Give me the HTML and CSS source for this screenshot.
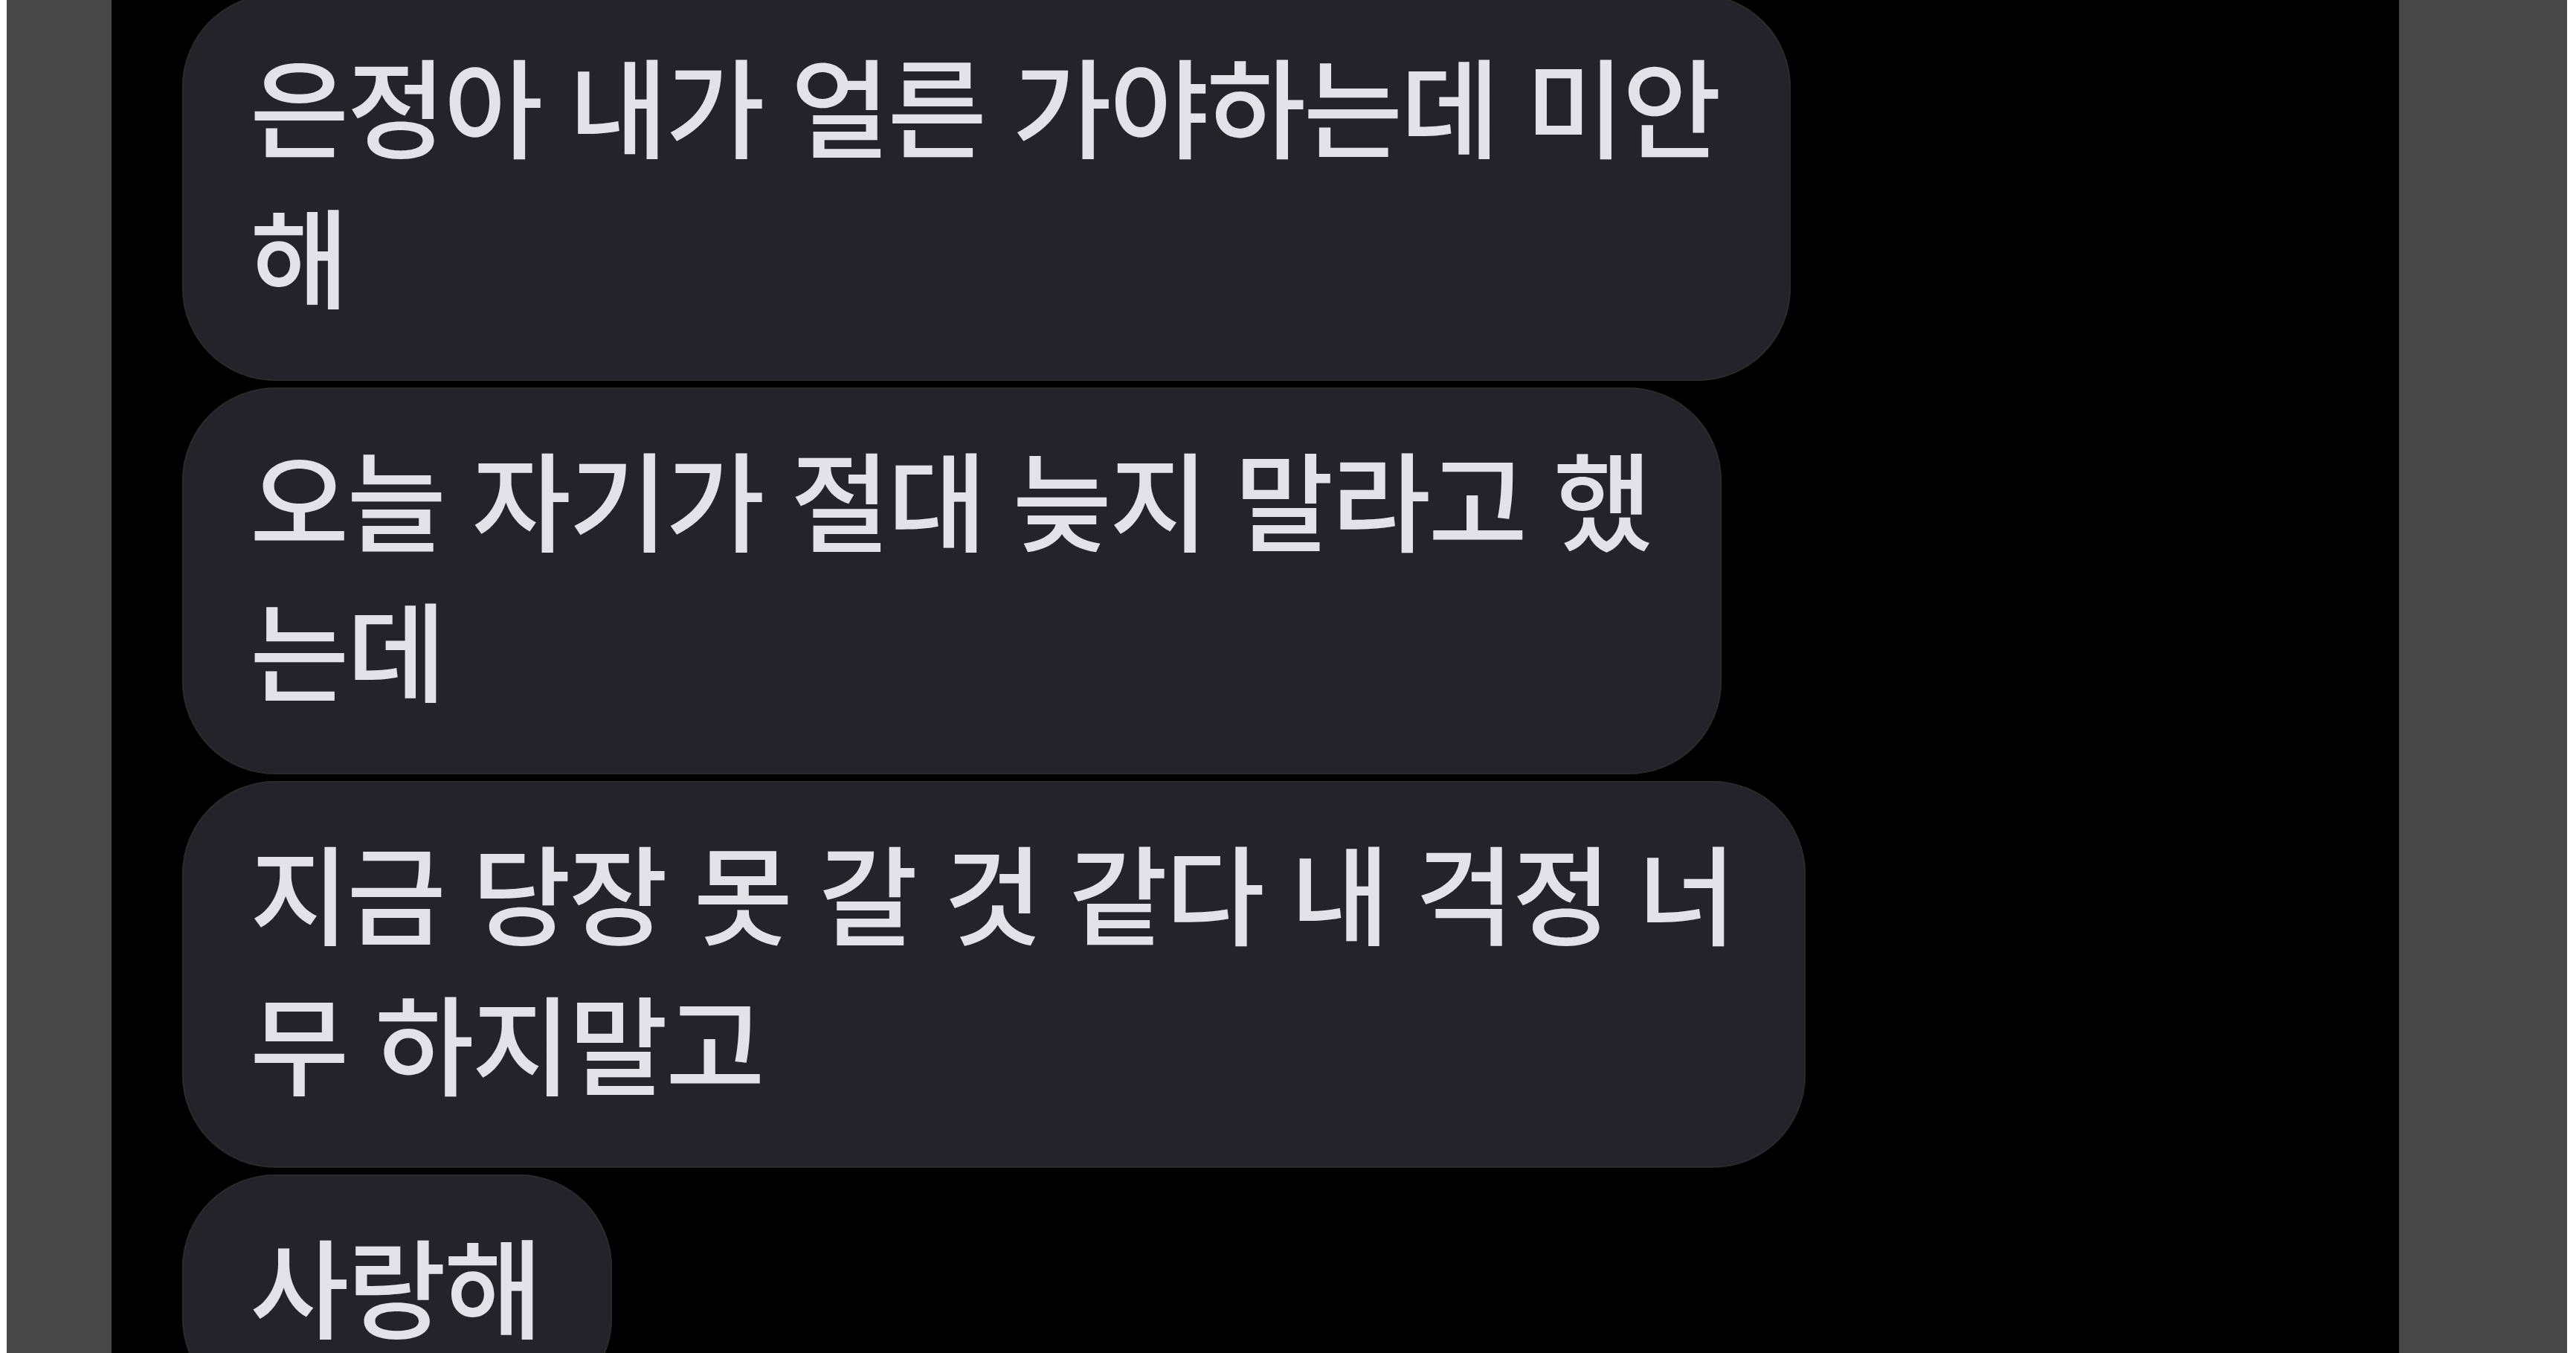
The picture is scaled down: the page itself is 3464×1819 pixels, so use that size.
FILE: index.html
```html
<!DOCTYPE html>
<html lang="ko">
<head>
  <meta charset="UTF-8" />
  <meta name="viewport" content="width=device-width, initial-scale=1.0" />
  <title>메시지</title>
  <link rel="stylesheet" href="styles.css">
</head>
<body>
  <div class="frame">
    <div class="edge"></div>
    <div class="side side-left"></div>

    <main class="chat">
      <p class="bubble">은정아 내가 얼른 가야하는데 미안<br />해</p>
      <p class="bubble">오늘 자기가 절대 늦지 말라고 했<br />는데</p>
      <p class="bubble">지금 당장 못 갈 것 같다 내 걱정 너<br />무 하지말고</p>
      <p class="bubble">사랑해</p>
    </main>

    <div class="side side-right"></div>
    <div class="edge edge-right"></div>
  </div>
</body>
</html>
```

FILE: styles.css
```css
html, body { margin: 0; padding: 0; height: 100%; overflow: hidden; background: #fff; }
.frame { display: flex; height: 100%; }
.edge { width: 9px; background: #fff; }
.edge-right { width: 12px; }
.side { background: #474747; }
.side-left { width: 141px; }
.side-right { width: 226px; }

.chat {
  flex: 1;
  background: #000;
  padding-left: 95px;
  display: flex;
  flex-direction: column;
  align-items: flex-start;
  gap: 9px;
  font-family: "Noto Sans CJK KR", "Noto Sans", sans-serif;
}

.bubble {
  margin: 0;
  background: #242329;
  color: #e2e2e8;
  font-size: 145px;
  font-weight: 500;
  line-height: 202px;
  letter-spacing: -3px;
  word-spacing: 0;
  padding: 46px 96px 70px 91px;
  border-radius: 125px;
  white-space: nowrap;
  box-shadow: inset 0 0 0 2px #2a2a2d;
}
.bubble:first-child { margin-top: -8px; }
```
